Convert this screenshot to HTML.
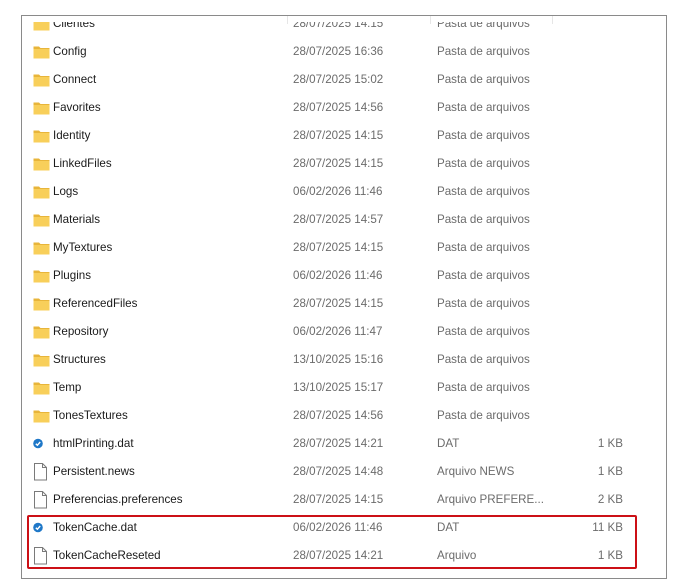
<!DOCTYPE html>
<html><head><meta charset="utf-8"><style>
html,body{margin:0;padding:0;background:#fff;width:675px;height:585px;overflow:hidden}
body{font-family:"Liberation Sans",sans-serif;font-size:11.6px;position:relative}
#frame{position:absolute;left:21px;top:15px;width:644px;height:562px;border:1px solid #8a8a8a;overflow:hidden;background:#fff}
.row{position:absolute;left:0;height:28px;width:644px}
.row span{position:absolute;top:0;line-height:28px;white-space:nowrap}
.n{left:31px;color:#1a1a1a}
.d{left:271px;color:#6b6b6b}
.t{left:415px;color:#6b6b6b}
.s{right:43px;color:#6b6b6b}
.ic{position:absolute;left:11px;top:7px}
#hdr{position:absolute;left:0;top:0;width:644px;height:6px;background:#fff}
.sep{position:absolute;top:0;width:1px;height:8px;background:#e6e6e6}
#red{position:absolute;left:27px;top:515px;width:606px;height:50px;border:2px solid #cc1016;border-radius:2px}
</style></head><body>
<div id="frame">
<div id="rows"></div>
<div id="hdr"></div>
<div class="sep" style="left:265px"></div><div class="sep" style="left:408px"></div><div class="sep" style="left:530px"></div>
</div>
<div id="red"></div>
<script>
var folder='<svg class="ic" width="17" height="14" viewBox="0 0 17 14"><path d="M0.5 1.5h5.5l1.5 1.5h9v10.5h-16z" fill="#e8b53a"/><rect x="0.5" y="4" width="16" height="9.5" fill="#f8cf5a"/></svg>';
var dat='<svg class="ic" width="17" height="14" viewBox="0 0 17 14"><circle cx="5" cy="6.5" r="4.8" fill="#1f78c8"/><path d="M2.8 6.8l1.6 1.4 2.8-3.2" stroke="#fff" stroke-width="1.4" fill="none"/></svg>';
var file='<svg class="ic" style="top:5px" width="17" height="18" viewBox="0 0 17 18"><path d="M1.5 0.5h8l4 4v12.5h-12z" fill="#fff" stroke="#7a7a7a"/><path d="M9.5 0.5v4h4" fill="none" stroke="#7a7a7a"/></svg>';
var R=[
["Clientes","28/07/2025 14:15","Pasta de arquivos","",folder],
["Config","28/07/2025 16:36","Pasta de arquivos","",folder],
["Connect","28/07/2025 15:02","Pasta de arquivos","",folder],
["Favorites","28/07/2025 14:56","Pasta de arquivos","",folder],
["Identity","28/07/2025 14:15","Pasta de arquivos","",folder],
["LinkedFiles","28/07/2025 14:15","Pasta de arquivos","",folder],
["Logs","06/02/2026 11:46","Pasta de arquivos","",folder],
["Materials","28/07/2025 14:57","Pasta de arquivos","",folder],
["MyTextures","28/07/2025 14:15","Pasta de arquivos","",folder],
["Plugins","06/02/2026 11:46","Pasta de arquivos","",folder],
["ReferencedFiles","28/07/2025 14:15","Pasta de arquivos","",folder],
["Repository","06/02/2026 11:47","Pasta de arquivos","",folder],
["Structures","13/10/2025 15:16","Pasta de arquivos","",folder],
["Temp","13/10/2025 15:17","Pasta de arquivos","",folder],
["TonesTextures","28/07/2025 14:56","Pasta de arquivos","",folder],
["htmlPrinting.dat","28/07/2025 14:21","DAT","1 KB",dat],
["Persistent.news","28/07/2025 14:48","Arquivo NEWS","1 KB",file],
["Preferencias.preferences","28/07/2025 14:15","Arquivo PREFERE...","2 KB",file],
["TokenCache.dat","06/02/2026 11:46","DAT","11 KB",dat],
["TokenCacheReseted","28/07/2025 14:21","Arquivo","1 KB",file]];
var h='';
R.forEach(function(r,i){var top=-6+i*28;
h+='<div class="row" style="top:'+top+'px">'+r[4]+'<span class="n">'+r[0]+'</span><span class="d">'+r[1]+'</span><span class="t">'+r[2]+'</span><span class="s">'+r[3]+'</span></div>';});
document.getElementById('rows').innerHTML=h;
</script>
</body></html>
